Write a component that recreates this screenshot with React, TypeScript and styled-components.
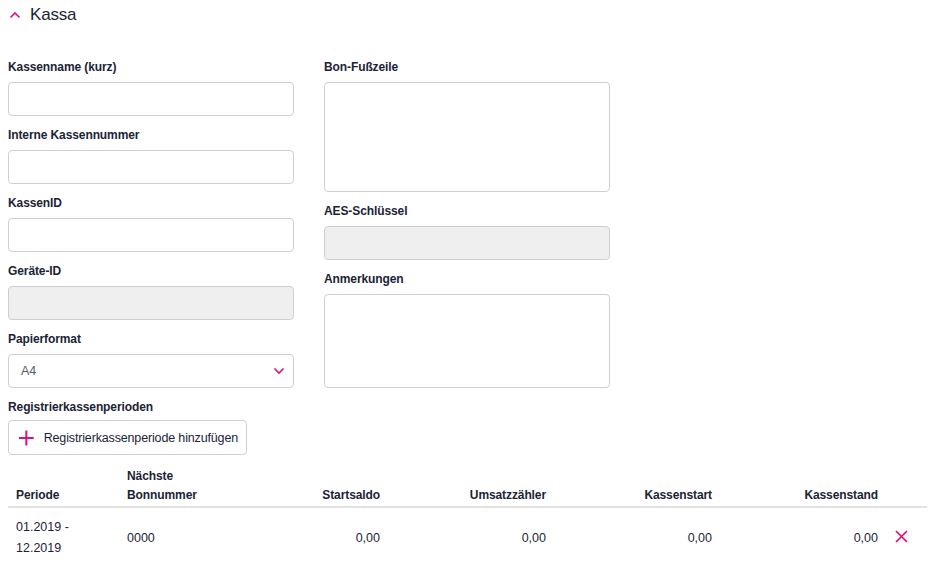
import { createGlobalStyle } from 'styled-components'
import styled from 'styled-components'

const PINK = '#d9127c'
const TEXT = '#1b2436'

const GlobalStyle = createGlobalStyle`
  html, body {
    margin: 0;
    padding: 0;
    background: #ffffff;
  }
  body {
    font-family: 'Liberation Sans', Arial, sans-serif;
    color: ${TEXT};
  }
  * {
    box-sizing: border-box;
  }
`

const Page = styled.div`
  width: 930px;
  height: 564px;
  padding: 0 3px 0 8px;
  overflow: hidden;
`

const Header = styled.div`
  display: flex;
  align-items: center;
  gap: 9px;
  height: 30px;
  padding-left: 1px;
  font-size: 17px;
  color: ${TEXT};
  letter-spacing: -0.2px;
`

const Form = styled.div`
  display: flex;
  gap: 30px;
  margin-top: 29px;
`

const Column = styled.div`
  display: flex;
  flex-direction: column;
  width: 286px;
`

const Field = styled.div`
  display: flex;
  flex-direction: column;
  margin-bottom: 11px;
`

const Label = styled.label`
  font-size: 12px;
  font-weight: 700;
  line-height: 16px;
  margin-bottom: 7px;
  letter-spacing: -0.1px;
`

const Input = styled.input<{ disabled?: boolean }>`
  height: 34px;
  border: 1px solid #cfcfcf;
  border-radius: 4px;
  background: ${(p) => (p.disabled ? '#efefef' : '#ffffff')};
  font: inherit;
  outline: none;
`

const TextArea = styled.textarea<{ h: number }>`
  height: ${(p) => p.h}px;
  border: 1px solid #cfcfcf;
  border-radius: 4px;
  resize: none;
  font: inherit;
  outline: none;
`

const SelectBox = styled.div`
  display: flex;
  align-items: center;
  justify-content: space-between;
  height: 34px;
  border: 1px solid #cfcfcf;
  border-radius: 4px;
  padding: 0 8px 0 12px;
  font-size: 12.5px;
  color: #555c66;
`

const AddButton = styled.button`
  display: flex;
  align-items: center;
  gap: 9px;
  width: 239px;
  height: 35px;
  padding: 0 8px 0 9px;
  border: 1px solid #cfcfcf;
  border-radius: 4px;
  background: #ffffff;
  font-family: inherit;
  font-size: 12.5px;
  color: ${TEXT};
  letter-spacing: -0.15px;
  white-space: nowrap;
  margin-top: -2px;
`

const Table = styled.table`
  width: 919px;
  border-collapse: collapse;
  margin-top: 1px;
  table-layout: fixed;
  font-size: 12.5px;
`

const Th = styled.th<{ right?: boolean }>`
  text-align: ${(p) => (p.right ? 'right' : 'left')};
  vertical-align: bottom;
  font-size: 12px;
  font-weight: 700;
  line-height: 19px;
  padding: 0 8px 1px;
  border-bottom: 2px solid #e2e2e2;
  letter-spacing: -0.1px;
`

const Td = styled.td<{ right?: boolean }>`
  text-align: ${(p) => (p.right ? 'right' : 'left')};
  line-height: 21px;
  padding: 9px 8px 0;
  vertical-align: middle;
`

const IconCell = styled.td`
  padding: 9px 0 0 9px;
  vertical-align: middle;
`

const ChevronUp = () => (
  <svg width="12" height="8" viewBox="0 0 12 8">
    <path d="M1.5 6.5 L6 2 L10.5 6.5" stroke={PINK} strokeWidth="1.6" fill="none" />
  </svg>
)

const ChevronDown = () => (
  <svg width="12" height="8" viewBox="0 0 12 8">
    <path d="M1.5 1.5 L6 6 L10.5 1.5" stroke={PINK} strokeWidth="1.6" fill="none" />
  </svg>
)

const Plus = () => (
  <svg width="18" height="18" viewBox="0 0 18 18">
    <path d="M9 1 V17 M1 9 H17" stroke={PINK} strokeWidth="2.2" fill="none" />
  </svg>
)

const Cross = () => (
  <svg width="13" height="13" viewBox="0 0 13 13">
    <path d="M1 1 L12 12 M12 1 L1 12" stroke={PINK} strokeWidth="1.7" fill="none" />
  </svg>
)

export default function App() {
  return (
    <Page>
      <GlobalStyle />
      <Header>
        <ChevronUp />
        <span>Kassa</span>
      </Header>
      <Form>
        <Column>
          <Field>
            <Label>Kassenname (kurz)</Label>
            <Input />
          </Field>
          <Field>
            <Label>Interne Kassennummer</Label>
            <Input />
          </Field>
          <Field>
            <Label>KassenID</Label>
            <Input />
          </Field>
          <Field>
            <Label>Geräte-ID</Label>
            <Input disabled />
          </Field>
          <Field>
            <Label>Papierformat</Label>
            <SelectBox>
              <span>A4</span>
              <ChevronDown />
            </SelectBox>
          </Field>
          <Field>
            <Label>Registrierkassenperioden</Label>
            <AddButton>
              <Plus />
              Registrierkassenperiode hinzufügen
            </AddButton>
          </Field>
        </Column>
        <Column>
          <Field>
            <Label>Bon-Fußzeile</Label>
            <TextArea h={110} />
          </Field>
          <Field>
            <Label>AES-Schlüssel</Label>
            <Input disabled />
          </Field>
          <Field>
            <Label>Anmerkungen</Label>
            <TextArea h={94} />
          </Field>
        </Column>
      </Form>
      <Table>
        <colgroup>
          <col style={{ width: 111 }} />
          <col style={{ width: 103 }} />
          <col style={{ width: 166 }} />
          <col style={{ width: 166 }} />
          <col style={{ width: 166 }} />
          <col style={{ width: 166 }} />
          <col style={{ width: 41 }} />
        </colgroup>
        <thead>
          <tr>
            <Th>Periode</Th>
            <Th>
              Nächste
              <br />
              Bonnummer
            </Th>
            <Th right>Startsaldo</Th>
            <Th right>Umsatzzähler</Th>
            <Th right>Kassenstart</Th>
            <Th right>Kassenstand</Th>
            <Th />
          </tr>
        </thead>
        <tbody>
          <tr>
            <Td>
              01.2019 -
              <br />
              12.2019
            </Td>
            <Td>0000</Td>
            <Td right>0,00</Td>
            <Td right>0,00</Td>
            <Td right>0,00</Td>
            <Td right>0,00</Td>
            <IconCell>
              <Cross />
            </IconCell>
          </tr>
        </tbody>
      </Table>
    </Page>
  )
}
